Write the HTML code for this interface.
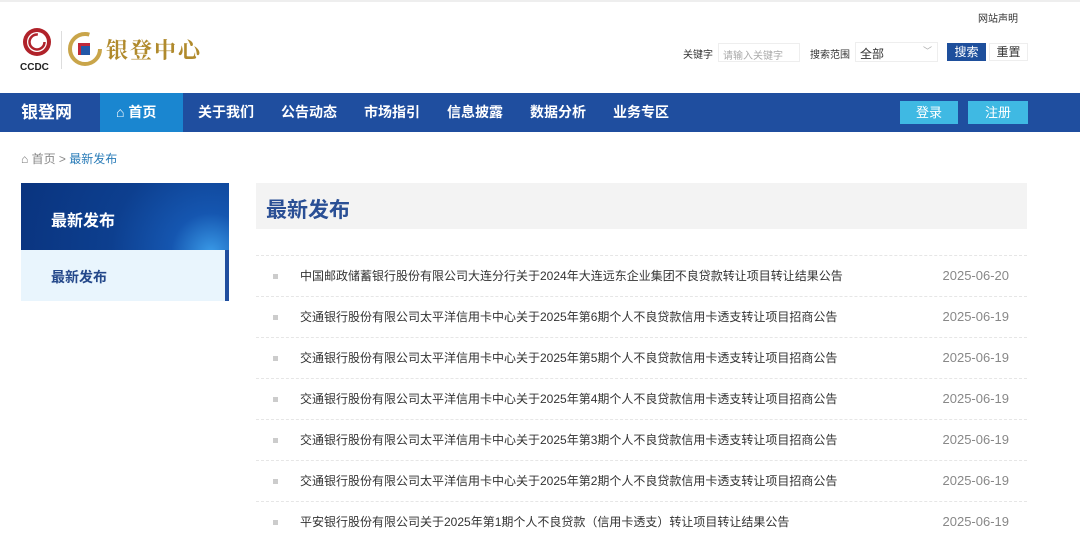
<!DOCTYPE html><html><head><meta charset="utf-8"><style>
*{margin:0;padding:0;box-sizing:border-box}
body{width:1080px;height:537px;overflow:hidden;background:#fff;font-family:"Liberation Sans","Noto Sans CJK SC",sans-serif;position:relative;color:#333}
.a{position:absolute}
.nav a{position:absolute;top:0;height:39px;line-height:39px;color:#fff;font-weight:bold;font-size:14px}
.row{position:absolute;left:256px;width:771px;height:41px;border-top:1px dashed #e6e6e6;font-size:12px;color:#333;line-height:40px}
.row .d{position:absolute;left:17px;top:18px;width:5px;height:5px;background:#ccc}
.row .t{position:absolute;left:44px;top:0}
.row .dt{position:absolute;right:18px;top:0;color:#888;font-size:13px}
</style></head><body>
<div class="a" style="left:0;top:0;width:1080px;height:2px;background:#eee"></div>
<svg class="a" style="left:20px;top:27px" width="36" height="46" viewBox="0 0 36 46"><circle cx="17" cy="15" r="14" fill="#b0222a"/><circle cx="17" cy="15" r="10" fill="#fff"/><circle cx="17" cy="15" r="7.5" fill="none" stroke="#b0222a" stroke-width="2.5" stroke-dasharray="36 12"/><text x="0" y="43" font-size="10" font-weight="bold" font-family="Liberation Sans" fill="#222">CCDC</text></svg>
<div class="a" style="left:61px;top:31px;width:1px;height:38px;background:#ddd"></div>
<svg class="a" style="left:68px;top:32px" width="34" height="34"><circle cx="17" cy="17" r="15" fill="none" stroke="#c9a54a" stroke-width="4" stroke-dasharray="75 20"/><rect x="10" y="11" width="12" height="12" fill="#c0283a"/><rect x="13" y="14" width="9" height="9" fill="#2358a8"/></svg>
<div class="a" style="left:106px;top:34px;font-size:22px;color:#b08a2c;font-family:'Noto Serif CJK SC',serif;font-weight:bold;letter-spacing:2px">银登中心</div>
<div class="a" style="left:978px;top:10px;font-size:10px;color:#333">网站声明</div>
<div class="a" style="left:683px;top:46px;font-size:10px">关键字</div>
<div class="a" style="left:718px;top:43px;width:82px;height:19px;border:1px solid #eee;font-size:10px;color:#aaa;padding:3px 4px">请输入关键字</div>
<div class="a" style="left:810px;top:46px;font-size:10px">搜索范围</div>
<div class="a" style="left:855px;top:42px;width:83px;height:20px;border:1px solid #eee;font-size:12px;padding:2px 4px">全部<span style="position:absolute;right:5px;top:1px;color:#aaa;font-size:9px">﹀</span></div>
<div class="a" style="left:947px;top:43px;width:39px;height:18px;background:#1e4f9c;color:#fff;font-size:12px;text-align:center;line-height:18px">搜索</div>
<div class="a" style="left:989px;top:43px;width:39px;height:18px;border:1px solid #eee;font-size:12px;text-align:center;line-height:16px">重置</div>
<div class="a nav" style="left:0;top:93px;width:1080px;height:39px;background:#1f4e9f">
<a style="left:21px;font-size:17px">银登网</a>
<div class="a" style="left:100px;top:0;width:83px;height:39px;background:#1a86d0"></div>
<a style="left:116px">⌂ 首页</a>
<a style="left:198px">关于我们</a><a style="left:281px">公告动态</a><a style="left:364px">市场指引</a><a style="left:447px">信息披露</a><a style="left:530px">数据分析</a><a style="left:613px">业务专区</a>
<div class="a" style="left:900px;top:8px;width:58px;height:23px;background:#3fb9e3;color:#fff;font-size:13px;text-align:center;line-height:23px">登录</div>
<div class="a" style="left:968px;top:8px;width:60px;height:23px;background:#3fb9e3;color:#fff;font-size:13px;text-align:center;line-height:23px">注册</div>
</div>
<div class="a" style="left:21px;top:150px;font-size:12px;color:#888"><span style="color:#777">⌂</span> 首页 &gt; <span style="color:#2a7cb8">最新发布</span></div>
<div class="a" style="left:21px;top:183px;width:208px;height:67px;background:radial-gradient(circle at 190px 70px,#3a9be8 0,#1556b0 40px,#0d3f8f 100px,#0a347f 200px)"></div>
<div class="a" style="left:51px;top:207px;font-size:16px;font-weight:bold;color:#fff">最新发布</div>
<div class="a" style="left:21px;top:250px;width:208px;height:51px;background:#e9f5fd;border-right:4px solid #1f4e9f"></div>
<div class="a" style="left:51px;top:267px;font-size:14px;font-weight:bold;color:#24488a">最新发布</div>
<div class="a" style="left:256px;top:183px;width:771px;height:46px;background:#f3f3f3"></div>
<div class="a" style="left:266px;top:194px;font-size:21px;font-weight:bold;color:#2a4f95">最新发布</div>
<div class="row" style="top:255px"><i class="d"></i><span class="t">中国邮政储蓄银行股份有限公司大连分行关于2024年大连远东企业集团不良贷款转让项目转让结果公告</span><span class="dt">2025-06-20</span></div>
<div class="row" style="top:296px"><i class="d"></i><span class="t">交通银行股份有限公司太平洋信用卡中心关于2025年第6期个人不良贷款信用卡透支转让项目招商公告</span><span class="dt">2025-06-19</span></div>
<div class="row" style="top:337px"><i class="d"></i><span class="t">交通银行股份有限公司太平洋信用卡中心关于2025年第5期个人不良贷款信用卡透支转让项目招商公告</span><span class="dt">2025-06-19</span></div>
<div class="row" style="top:378px"><i class="d"></i><span class="t">交通银行股份有限公司太平洋信用卡中心关于2025年第4期个人不良贷款信用卡透支转让项目招商公告</span><span class="dt">2025-06-19</span></div>
<div class="row" style="top:419px"><i class="d"></i><span class="t">交通银行股份有限公司太平洋信用卡中心关于2025年第3期个人不良贷款信用卡透支转让项目招商公告</span><span class="dt">2025-06-19</span></div>
<div class="row" style="top:460px"><i class="d"></i><span class="t">交通银行股份有限公司太平洋信用卡中心关于2025年第2期个人不良贷款信用卡透支转让项目招商公告</span><span class="dt">2025-06-19</span></div>
<div class="row" style="top:501px"><i class="d"></i><span class="t">平安银行股份有限公司关于2025年第1期个人不良贷款（信用卡透支）转让项目转让结果公告</span><span class="dt">2025-06-19</span></div>
</body></html>
